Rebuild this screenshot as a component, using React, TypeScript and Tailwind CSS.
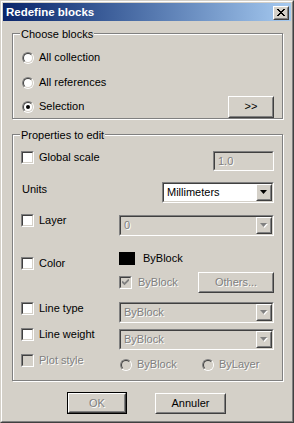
import type { ReactNode } from "react";
import clsx from "clsx";

const disabledText = "text-[#808080] [text-shadow:1px_1px_0_#fff]";

function Sunken({ className, inner, children }: { className?: string; inner?: string; children?: ReactNode }) {
  return (
    <div className={clsx("shrink-0 border border-t-[#808080] border-l-[#808080] border-r-white border-b-white", className)}>
      <div className={clsx("h-full w-full border border-t-[#404040] border-l-[#404040] border-r-[#d4d0c8] border-b-[#d4d0c8]", inner)}>
        {children}
      </div>
    </div>
  );
}

function Raised({ className, children }: { className?: string; children?: ReactNode }) {
  return (
    <div className={clsx("shrink-0 border border-t-white border-l-white border-r-[#404040] border-b-[#404040] bg-[#d4d0c8]", className)}>
      <div className="flex h-full w-full items-center justify-center border border-t-[#d4d0c8] border-l-[#d4d0c8] border-r-[#808080] border-b-[#808080]">
        {children}
      </div>
    </div>
  );
}

function CheckBox({ checked, disabled }: { checked?: boolean; disabled?: boolean }) {
  return (
    <Sunken
      className="h-[13px] w-[13px]"
      inner={clsx("flex items-center justify-center", disabled ? "bg-[#d4d0c8]" : "bg-white")}
    >
      {checked && (
        <svg width="7" height="7" viewBox="0 0 7 7">
          <path d="M0 2.5 L2.5 5 L7 0.5" fill="none" stroke={disabled ? "#808080" : "#000"} strokeWidth="1.8" />
        </svg>
      )}
    </Sunken>
  );
}

function Radio({ checked, disabled }: { checked?: boolean; disabled?: boolean }) {
  return (
    <div className="h-[12px] w-[12px] shrink-0 rounded-full border border-t-[#808080] border-l-[#808080] border-r-white border-b-white">
      <div
        className={clsx(
          "flex h-full w-full items-center justify-center rounded-full border border-t-[#404040] border-l-[#404040] border-r-[#d4d0c8] border-b-[#d4d0c8]",
          disabled ? "bg-[#d4d0c8]" : "bg-white"
        )}
      >
        {checked && <div className="h-[4px] w-[4px] rounded-full bg-black" />}
      </div>
    </div>
  );
}

function Arrow({ disabled }: { disabled?: boolean }) {
  return (
    <svg width="8" height="5" viewBox="0 0 8 5">
      {disabled && <polygon points="1,1 8,1 4.5,5" fill="#fff" />}
      <polygon points="0,0 7,0 3.5,4" fill={disabled ? "#808080" : "#000"} />
    </svg>
  );
}

function Select({ value, disabled, className }: { value: string; disabled?: boolean; className?: string }) {
  return (
    <Sunken
      className={clsx("h-[21px]", className)}
      inner={clsx("flex items-stretch", disabled ? "bg-[#d4d0c8]" : "bg-white")}
    >
      <span className={clsx("flex flex-1 items-center pl-[3px]", disabled && disabledText)}>{value}</span>
      <Raised className="w-[16px]">
        <Arrow disabled={disabled} />
      </Raised>
    </Sunken>
  );
}

function Check({ label, disabled }: { label: string; disabled?: boolean }) {
  return (
    <div className="flex items-center gap-[5px]">
      <CheckBox disabled={disabled} />
      <span className={clsx("leading-[13px]", disabled && disabledText)}>{label}</span>
    </div>
  );
}

function GroupBox({ title, className, children }: { title: string; className?: string; children?: ReactNode }) {
  return (
    <div className={clsx("w-[271px] border border-[#808080] shadow-[inset_1px_1px_0_#fff,1px_1px_0_#fff]", className)}>
      <div className="-mt-[6px] ml-[7px] w-fit bg-[#d4d0c8] px-[1px] leading-[13px]">{title}</div>
      {children}
    </div>
  );
}

function RadioRow({ label, checked, className, children }: { label: string; checked?: boolean; className?: string; children?: ReactNode }) {
  return (
    <div className={clsx("flex items-center justify-between", className)}>
      <div className="flex items-center gap-[5px]">
        <Radio checked={checked} />
        <span className="leading-[13px]">{label}</span>
      </div>
      {children}
    </div>
  );
}

export default function App() {
  return (
    <div className="h-[423px] w-[294px] border border-t-[#d4d0c8] border-l-[#d4d0c8] border-r-[#404040] border-b-[#404040] bg-[#d4d0c8] font-['Liberation_Sans',Arial,sans-serif] text-[11px] text-black">
      <div className="flex h-full flex-col border border-t-white border-l-white border-r-[#808080] border-b-[#808080] p-px">
        {/* Title bar */}
        <div className="flex h-[18px] shrink-0 items-center justify-between bg-linear-to-r from-[#0a246a] to-[#a6caf0] pl-[3px] pr-[2px]">
          <span className="text-[11.5px] font-bold leading-[14px] text-white">Redefine blocks</span>
          <Raised className="mt-[1px] h-[14px] w-[16px]">
            <svg width="8" height="7" viewBox="0 0 8 7">
              <path d="M0 0 L7 7 M1 0 L8 7 M7 0 L0 7 M8 0 L1 7" stroke="#000" strokeWidth="1" />
            </svg>
          </Raised>
        </div>

        <div className="flex flex-col pl-[9px]">
          {/* Choose blocks */}
          <GroupBox title="Choose blocks" className="mt-[12px]">
            <div className="mt-[4px] flex flex-col pl-[9px] pr-[8px]">
              <RadioRow label="All collection" className="h-[25px]" />
              <RadioRow label="All references" className="h-[25px]" />
              <RadioRow label="Selection" checked className="h-[23px]">
                <Raised className="h-[22px] w-[46px]">
                  <span className="leading-none">&gt;&gt;</span>
                </Raised>
              </RadioRow>
            </div>
          </GroupBox>

          {/* Properties to edit */}
          <GroupBox title="Properties to edit" className="mt-[15px]">
            <div className="flex flex-col pb-[9px] pl-[8px] pr-[8px]">
              <div className="mt-[9px] flex h-[20px] items-start justify-between">
                <Check label="Global scale" />
                <Sunken className="h-[20px] w-[61px]" inner="flex items-center bg-[#d4d0c8] pl-[3px] pt-[1px]">
                  <span className={disabledText}>1.0</span>
                </Sunken>
              </div>

              <div className="mt-[11px] flex h-[21px] items-start justify-between">
                <span className="pl-[1px] pt-[1px] leading-[13px]">Units</span>
                <Select value="Millimeters" className="w-[112px]" />
              </div>

              <div className="mt-[11px] flex items-start justify-between">
                <Check label="Layer" />
                <Select value="0" disabled className="mt-[1px] w-[155px]" />
              </div>

              <div className="mt-[16px] flex items-start justify-between">
                <div className="mt-[5px]">
                  <Check label="Color" />
                </div>
                <div className="flex w-[155px] flex-col">
                  <div className="flex h-[13px] items-center gap-[8px]">
                    <div className="h-[13px] w-[16px] bg-black" />
                    <span className="leading-[13px]">ByBlock</span>
                  </div>
                  <div className="mt-[7px] flex h-[21px] items-center justify-between">
                    <div className="flex items-center gap-[6px]">
                      <CheckBox checked disabled />
                      <span className={clsx("leading-[13px]", disabledText)}>ByBlock</span>
                    </div>
                    <Raised className="h-[21px] w-[76px]">
                      <span className={disabledText}>Others...</span>
                    </Raised>
                  </div>
                </div>
              </div>

              <div className="mt-[9px] flex items-start justify-between">
                <Check label="Line type" />
                <Select value="ByBlock" disabled className="w-[155px]" />
              </div>

              <div className="mt-[5px] flex items-start justify-between">
                <Check label="Line weight" />
                <Select value="ByBlock" disabled className="mt-[1px] w-[155px]" />
              </div>

              <div className="mt-[4px] flex items-start justify-between">
                <Check label="Plot style" disabled />
                <div className="mt-[4px] flex w-[155px] items-center pl-[1px]">
                  <div className="flex w-[82px] items-center gap-[5px]">
                    <Radio disabled />
                    <span className={clsx("leading-[13px]", disabledText)}>ByBlock</span>
                  </div>
                  <div className="flex items-center gap-[5px]">
                    <Radio disabled />
                    <span className={clsx("leading-[13px]", disabledText)}>ByLayer</span>
                  </div>
                </div>
              </div>
            </div>
          </GroupBox>
        </div>

        {/* Dialog buttons */}
        <div className="mt-[11px] flex items-center justify-center gap-[28px] pr-[1px]">
          <div className="h-[22px] w-[60px] border border-black">
            <Raised className="h-full w-full">
              <span className={disabledText}>OK</span>
            </Raised>
          </div>
          <Raised className="h-[21px] w-[71px]">
            <span>Annuler</span>
          </Raised>
        </div>
      </div>
    </div>
  );
}
